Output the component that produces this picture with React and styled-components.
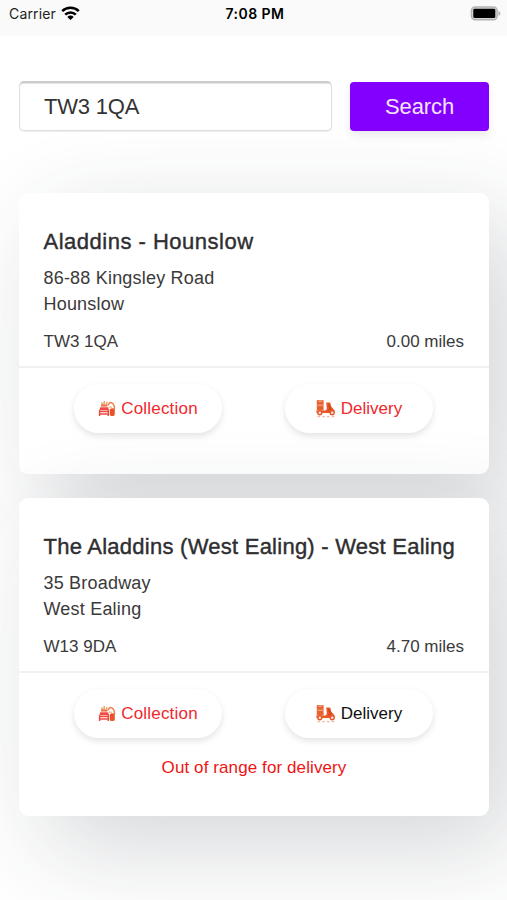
import React from 'react'
import styled, { createGlobalStyle } from 'styled-components';

const GlobalStyle = createGlobalStyle`
* {
    box-sizing: border-box;
}
body {
    margin: 0;
    background: #fff;
    font-family: "Liberation Sans", Arial, sans-serif;
    overflow: hidden;
}
`

const WifiIcon = () => (
  <svg width="19" height="15" viewBox="0 0 19 15">
    <g fill="none" stroke="#000" strokeWidth="2.5">
      <path d="M1.2 5.2a11.8 11.8 0 0 1 16.6 0" />
      <path d="M4.2 8.6a7.5 7.5 0 0 1 10.6 0" />
    </g>
    <path d="M9.5 14 6.3 10.9a4.6 4.6 0 0 1 6.4 0z" fill="#000" />
  </svg>
)

const BatteryIcon = () => (
  <svg width="31" height="16" viewBox="0 0 31 16">
    <rect x="1.4" y="1" width="25.8" height="12.8" rx="3.8" fill="#d4d4d2" stroke="#b3b3b3" strokeWidth="1.4" />
    <rect x="3.3" y="2.7" width="22" height="9.4" rx="1.4" fill="#000" />
    <path d="M28.5 4.9q1.9.8 1.9 2.5t-1.9 2.5z" fill="#b0b0b0" />
  </svg>
)

const CollectionIcon = () => (
  <svg width="18" height="17" viewBox="0 0 18 17">
    <path d="M3.4 2.4 5 4.6M6.2 1v3.4M9 1.8 8.4 4.4" stroke="#f0a274" strokeWidth="1.5" fill="none" />
    <path d="M3 4.4h6.4v2.2H3z" fill="#ef7045" />
    <path d="M2.2 7.2h8l.8 3H1.4z" fill="#ee4b45" />
    <path d="M.9 11.4h10.2M1.6 10v6M10.3 10v6M1.6 14h8.7" stroke="#ee4b45" strokeWidth="1.5" fill="none" />
    <path d="M9.8 5.2 12 2.6q4 .4 4.4 4.6v2" stroke="#e9854f" strokeWidth="1.5" fill="none" />
    <path d="M11.8 9.2q2.5-2 5 0v5q0 1.9-2.2 1.9-2.8 0-2.8-1.9z" fill="#e8532a" />
    <path d="M11 7.2h3" stroke="#f2b08d" strokeWidth="1.2" />
  </svg>
)

const DeliveryIcon = () => (
  <svg width="20" height="18" viewBox="0 0 20 18">
    <path d="M.8.2h6.8v10.2H.8z" fill="#e9612f" />
    <path d="M2.8 1.4h2.8M1.4 5.2h5.6" stroke="#f8c8b0" strokeWidth=".8" />
    <path d="M.4 10.4h8.4q2 0 2-2.2L10.2 2.6h4l1 4 3.6 4.2-.8 2.2H.4z" fill="#e8592a" />
    <path d="M12.2 4.2 14.8 8.6l-2.4 1.6" stroke="#d8441c" strokeWidth="1.6" fill="none" />
    <circle cx="3.8" cy="12.8" r="2" fill="#fbe3d8" stroke="#e8592a" strokeWidth="1.4" />
    <circle cx="16.2" cy="12.8" r="2" fill="#fbe3d8" stroke="#e8592a" strokeWidth="1.4" />
    <path d="M1.6 16.7h17" stroke="#f3a78c" strokeWidth="1" strokeDasharray="2.5 2.2" />
  </svg>
)

const App = () => {
  const stores = [
    {
      name: "Aladdins - Hounslow",
      nameSpacing: "0.5px",
      street: "86-88 Kingsley Road",
      town: "Hounslow",
      postcode: "TW3 1QA",
      distance: "0.00 miles",
      delivers: true,
    },
    {
      name: "The Aladdins (West Ealing) - West Ealing",
      nameSpacing: "0.25px",
      street: "35 Broadway",
      town: "West Ealing",
      postcode: "W13 9DA",
      distance: "4.70 miles",
      delivers: false,
    },
  ];
  return (
    <Screen>
      <GlobalStyle />
      <StatusBar>
        <Carrier>Carrier <WifiIcon /></Carrier>
        <Clock>7:08 PM</Clock>
        <Battery><BatteryIcon /></Battery>
      </StatusBar>
      <SearchRow>
        <SearchInput defaultValue="TW3 1QA" />
        <SearchButton>Search</SearchButton>
      </SearchRow>
      <StoreList>
        {stores.map((store) => (
          <Card key={store.name}>
            <Details>
              <StoreName $spacing={store.nameSpacing}>{store.name}</StoreName>
              <Address>{store.street}<br />{store.town}</Address>
              <Meta>
                <span>{store.postcode}</span>
                <span>{store.distance}</span>
              </Meta>
            </Details>
            <Options>
              <Pill $color="#f0282d" $spacing="0.2px"><CollectionIcon />Collection</Pill>
              <Pill $color={store.delivers ? "#f0282d" : "#111"}><DeliveryIcon />Delivery</Pill>
            </Options>
            {!store.delivers && <Warning>Out of range for delivery</Warning>}
          </Card>
        ))}
      </StoreList>
    </Screen>
  )
}

const Screen = styled.div`
height: 900px;
overflow: hidden;
background: #fff;
`

const StatusBar = styled.header`
display: grid;
grid-template-columns: 1fr auto 1fr;
align-items: center;
height: 36px;
padding: 0 6px 9px 9px;
background: #fafafa;
color: #000;
font-family: Inter, sans-serif;
font-size: 14px;
`

const Carrier = styled.div`
display: flex;
align-items: center;
gap: 5px;
color: #222;
letter-spacing: 0.15px;
`

const Clock = styled.div`
font-weight: 600;
letter-spacing: 0.45px;
`

const Battery = styled.div`
display: flex;
justify-content: flex-end;
`

const SearchRow = styled.div`
display: flex;
gap: 18px;
padding: 45px 18px 0 19px;
`

const SearchInput = styled.input`
flex: 1;
min-width: 0;
height: 50px;
padding: 0 24px;
border: 1.5px solid #dedede;
border-top: 2px solid #cbcbcb;
border-radius: 5px;
background: #fff;
box-shadow: 0 1px 0 #eee, inset 0 1px 0 #e4e4e4;
color: #333;
font-family: inherit;
font-size: 22px;
letter-spacing: -0.2px;
outline: none;
`

const SearchButton = styled.button`
width: 139px;
height: 49px;
margin-top: 1px;
padding: 0;
border: none;
border-radius: 4px;
background: #8400fe;
box-shadow: 0 4px 8px rgba(50, 50, 93, 0.1);
color: #f6e5ff;
font-family: inherit;
font-size: 22px;
letter-spacing: -0.1px;
`

const StoreList = styled.main`
display: flex;
flex-direction: column;
gap: 24px;
padding: 62px 18px 0 19px;
`

const Card = styled.article`
min-height: 281px;
padding-bottom: 38px;
border-radius: 9px;
background: #fff;
box-shadow: 28px 30px 100px rgba(40, 50, 58, 0.2);
`

const Details = styled.div`
padding: 36px 25px 14px 24.5px;
border-bottom: 2px solid #f1f1f2;
color: #3a3a3a;
`

const StoreName = styled.h2`
margin: 0;
color: #2e2e30;
font-size: 22px;
font-weight: 400;
line-height: 26px;
letter-spacing: ${props => props.$spacing};
white-space: nowrap;
-webkit-text-stroke: 0.4px #2e2e30;
`

const Address = styled.p`
margin: 11px 0 0;
font-size: 18px;
line-height: 25.5px;
letter-spacing: 0.2px;
`

const Meta = styled.div`
display: flex;
justify-content: space-between;
margin-top: 15px;
font-size: 17px;
line-height: 20px;
`

const Options = styled.div`
display: flex;
justify-content: space-between;
padding: 16px 56px 0 55px;
`

const Pill = styled.button`
display: flex;
align-items: center;
justify-content: center;
gap: 5px;
width: 148px;
height: 49px;
padding: 0;
border: none;
border-radius: 25px;
background: #fff;
box-shadow: 0 3px 6px rgba(50, 50, 73, 0.13);
color: ${props => props.$color};
font-family: inherit;
font-size: 17px;
letter-spacing: ${props => props.$spacing || "0"};
`

const Warning = styled.p`
margin: 20px 0 0;
color: #ee1414;
font-size: 17px;
line-height: 20px;
letter-spacing: 0.1px;
text-align: center;
`

export default App
